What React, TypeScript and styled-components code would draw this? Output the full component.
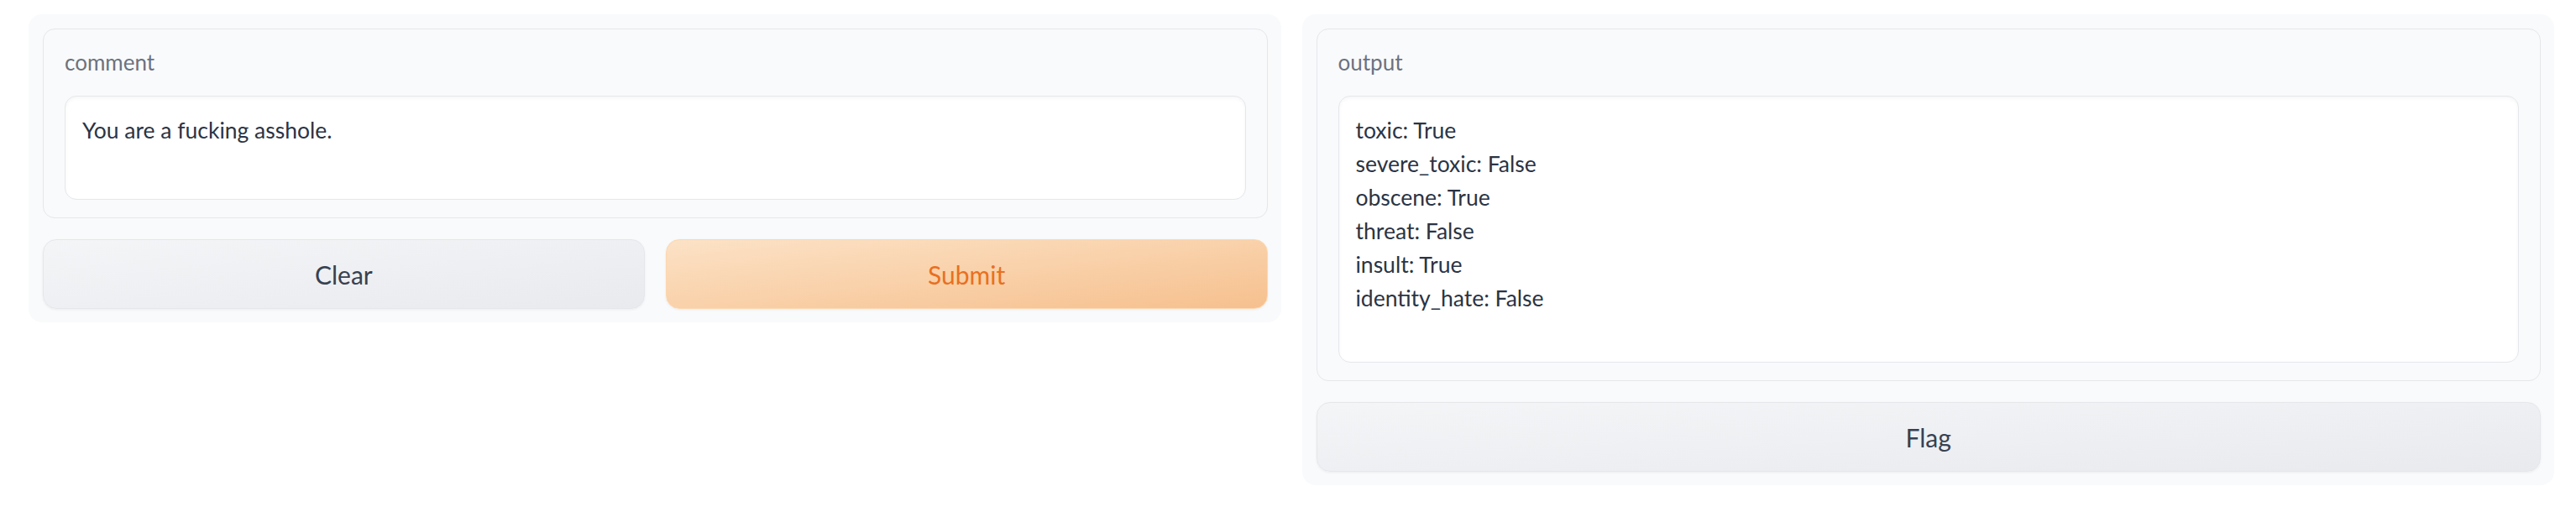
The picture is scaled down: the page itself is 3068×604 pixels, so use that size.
import React from "react";
import styled, { createGlobalStyle } from "styled-components";

const GlobalStyle = createGlobalStyle`
  html, body {
    margin: 0;
    padding: 0;
    background: #ffffff;
    font-family: Lato, "Open Sans", "Liberation Sans", sans-serif;
  }
  * {
    box-sizing: border-box;
  }
`;

const Page = styled.div`
  display: grid;
  grid-template-columns: 1fr 1fr;
  gap: 25px;
  align-items: start;
  padding: 17px 26px 0 34px;
`;

const Panel = styled.div`
  display: flex;
  flex-direction: column;
  gap: 25px;
  padding: 17px 16px 16px 17px;
  background: #f9fafb;
  border-radius: 16px;
`;

const Block = styled.label`
  display: flex;
  flex-direction: column;
  padding: 21px 25px 21px 25px;
  background: #f9fafb;
  border: 1px solid #e5e7eb;
  border-radius: 14px;
`;

const BlockLabel = styled.span`
  display: block;
  margin-bottom: 22px;
  font-size: 26px;
  line-height: 36px;
  color: #6b7280;
`;

const TextBox = styled.textarea<{ $height: number }>`
  display: block;
  width: 100%;
  height: ${(p) => p.$height}px;
  padding: 20px 20px;
  border: 1px solid #e5e7eb;
  border-radius: 14px;
  background: #ffffff;
  box-shadow: inset 0 2px 4px rgba(0, 0, 0, 0.04);
  font-family: inherit;
  font-size: 26.5px;
  line-height: 40px;
  color: #2b3444;
  resize: none;
  outline: none;
  overflow: hidden;
`;

const ButtonRow = styled.div`
  display: grid;
  grid-template-columns: 1fr 1fr;
  gap: 25px;
`;

const Button = styled.button<{ $primary?: boolean }>`
  height: 83px;
  border-radius: 16px;
  font-family: inherit;
  font-size: 30px;
  cursor: pointer;
  border: 1px solid ${(p) => (p.$primary ? "#fdd7b0" : "#e5e7eb")};
  color: ${(p) => (p.$primary ? "#e8701f" : "#374151")};
  background: ${(p) =>
    p.$primary
      ? "linear-gradient(to bottom right, #fce2c6, #f6c08e)"
      : "linear-gradient(to bottom right, #f4f5f7, #e9eaee)"};
  box-shadow: 0 1px 3px rgba(0, 0, 0, 0.06);
`;

const outputText = [
  "toxic: True",
  "severe_toxic: False",
  "obscene: True",
  "threat: False",
  "insult: True",
  "identity_hate: False",
].join("\n");

export default function App() {
  return (
    <>
      <GlobalStyle />
      <Page>
        <Panel>
          <Block>
            <BlockLabel>comment</BlockLabel>
            <TextBox $height={124} defaultValue="You are a fucking asshole." />
          </Block>
          <ButtonRow>
            <Button>Clear</Button>
            <Button $primary>Submit</Button>
          </ButtonRow>
        </Panel>
        <Panel>
          <Block>
            <BlockLabel>output</BlockLabel>
            <TextBox $height={318} readOnly defaultValue={outputText} />
          </Block>
          <Button>Flag</Button>
        </Panel>
      </Page>
    </>
  );
}
